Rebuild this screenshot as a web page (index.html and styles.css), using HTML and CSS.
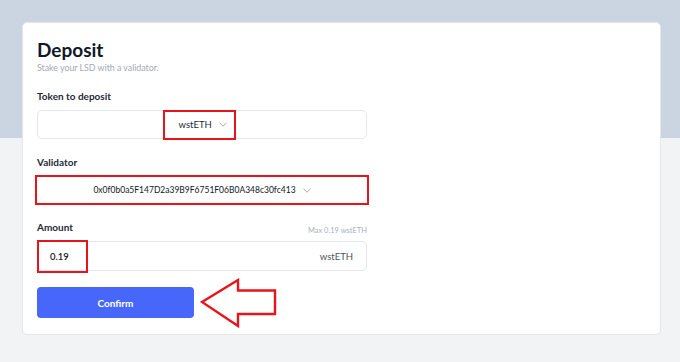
FILE: index.html
```html
<!DOCTYPE html>
<html lang="en">
<head>
    <meta charset="UTF-8">
    <meta name="viewport" content="width=device-width, initial-scale=1.0">
    <title>Deposit</title>
    <link rel="stylesheet" href="styles.css">
</head>
<body>

    <!-- Deposit card -->
    <main class="card">
        <h1 class="title">Deposit</h1>
        <p class="subtitle">Stake your LSD with a validator.</p>

        <form class="form" onsubmit="return false">

            <!-- Token -->
            <div class="field">
                <div class="label-row">
                    <label class="label">Token to deposit</label>
                </div>
                <div class="select">
                    <span class="mark token-mark">
                        wstETH
                        <svg class="chevron" width="8" height="5" viewBox="0 0 8 5"><path d="M0.5 0.8 L4 4.2 L7.5 0.8" fill="none" stroke="#9ca3af" stroke-width="0.9"/></svg>
                    </span>
                </div>
            </div>

            <!-- Validator -->
            <div class="field">
                <div class="label-row">
                    <label class="label">Validator</label>
                </div>
                <div class="mark-wrap">
                    <div class="select">
                        <span class="address">0x0f0b0a5F147D2a39B9F6751F06B0A348c30fc413</span>
                        <svg class="chevron" width="8" height="5" viewBox="0 0 8 5"><path d="M0.5 0.8 L4 4.2 L7.5 0.8" fill="none" stroke="#9ca3af" stroke-width="0.9"/></svg>
                    </div>
                </div>
            </div>

            <!-- Amount -->
            <div class="field">
                <div class="label-row">
                    <label class="label">Amount</label>
                    <span class="max">Max 0.19 wstETH</span>
                </div>
                <div class="amount-input">
                    <span class="mark amount-mark">0.19</span>
                    <span class="unit">wstETH</span>
                </div>
            </div>

            <div class="actions">
                <button class="confirm" type="submit">Confirm</button>
                <svg class="arrow" width="78" height="50" viewBox="0 0 78 50">
                    <polygon points="2,24 38,2 38,12.5 75,12.5 75,36 38,36 38,48" fill="#fff" stroke="#e8141c" stroke-width="2.4" stroke-linejoin="miter"/>
                </svg>
            </div>
        </form>
    </main>

</body>
</html>
```

FILE: styles.css
```css
/* Reset */
* {
    margin: 0;
    padding: 0;
    box-sizing: border-box;
    font-family: 'Lato', 'Noto Sans', sans-serif;
}

/* Page: blue-grey band on top, light grey below */
body {
    width: 680px;
    height: 362px;
    overflow: hidden;
    background: linear-gradient(#cbd5e1 0 138px, #f2f3f5 138px);
    padding: 22px 19px 0 22px;
}

/* Card */
.card {
    background: #ffffff;
    border: 1px solid #e5e7eb;
    border-radius: 5px;
    height: 313px;
    padding: 15px 14px 16px 14px;
}

.title {
    font-size: 19px;
    font-weight: 700;
    line-height: 24px;
    color: #111827;
}

.subtitle {
    font-size: 8.8px;
    line-height: 12px;
    color: #a3a9b4;
}

/* Form */
.form {
    width: 330px;
    margin-top: 15px;
    display: flex;
    flex-direction: column;
    gap: 16px;
}

.field {
    display: flex;
    flex-direction: column;
    gap: 7px;
}

.label-row {
    display: flex;
    justify-content: space-between;
    align-items: flex-end;
    height: 14px;
}

.label {
    font-size: 10px;
    font-weight: 700;
    line-height: 14px;
    color: #1f2937;
}

.max {
    font-size: 7.5px;
    line-height: 10px;
    color: #a8b0bc;
    margin-bottom: -2px;
}

.select,
.amount-input {
    height: 29px;
    border: 1px solid #e4e6ea;
    border-radius: 5px;
    display: flex;
    align-items: center;
    font-size: 9.5px;
    color: #1f2937;
}

.select {
    justify-content: center;
}

.chevron {
    margin-left: 7px;
}

/* Red highlight boxes */
.mark {
    border: 2.5px solid #e8141c;
    display: flex;
    align-items: center;
    height: 30px;
}

.token-mark {
    width: 73px;
    padding-left: 14px;
    margin-left: -6px;
}

.mark-wrap {
    border: 2.5px solid #e8141c;
    margin: -1px -2px -1px -2px;
    padding: 0 0.5px;
}

.mark-wrap .select {
    height: 26px;
    border-color: transparent;
}

.address {
    font-size: 8.5px;
    color: #111827;
}

.amount-input {
    justify-content: space-between;
    height: 30px;
}

.amount-mark {
    width: 51px;
    height: 33px;
    margin-left: -1px;
    padding-left: 11px;
    font-weight: 600;
    color: #111827;
}

.unit {
    padding-right: 13px;
    color: #4b5563;
}

/* Confirm row */
.actions {
    display: flex;
    align-items: center;
    gap: 6px;
}

.confirm {
    width: 157px;
    height: 31px;
    border: none;
    border-radius: 4px;
    background: #4766fa;
    color: #ffffff;
    font-size: 10px;
    font-weight: 700;
    cursor: pointer;
}

/* annotation arrow sticks out above and below the button */
.arrow {
    display: block;
    margin: -10px 0;
}
```
